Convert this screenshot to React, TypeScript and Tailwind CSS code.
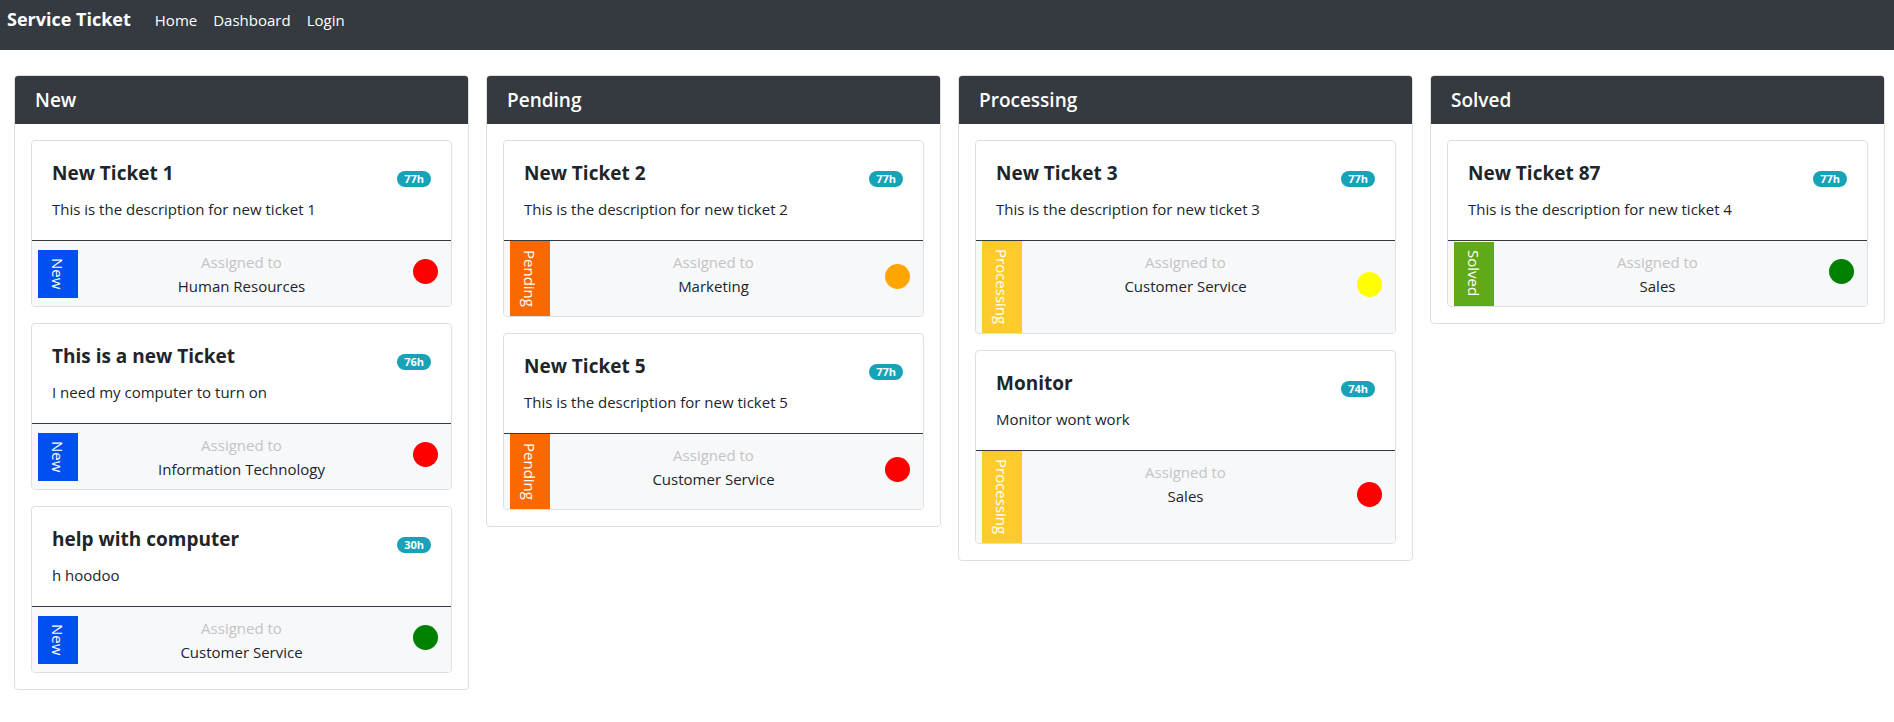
import React from "react";

type Ticket = {
  title: string;
  desc: string;
  age: string;
  dept: string;
  dot: string;
};

type Column = {
  name: string;
  strip: string;
  tickets: Ticket[];
};

const RED = "bg-[#ff0000]";
const GREEN = "bg-[#008000]";

const columns: Column[] = [
  {
    name: "New",
    strip: "bg-[#0050ef] h-[48px]",
    tickets: [
      { title: "New Ticket 1", desc: "This is the description for new ticket 1", age: "77h", dept: "Human Resources", dot: RED },
      { title: "This is a new Ticket", desc: "I need my computer to turn on", age: "76h", dept: "Information Technology", dot: RED },
      { title: "help with computer", desc: "h hoodoo", age: "30h", dept: "Customer Service", dot: GREEN },
    ],
  },
  {
    name: "Pending",
    strip: "bg-[#fa6800] h-[75px]",
    tickets: [
      { title: "New Ticket 2", desc: "This is the description for new ticket 2", age: "77h", dept: "Marketing", dot: "bg-[#ffa500]" },
      { title: "New Ticket 5", desc: "This is the description for new ticket 5", age: "77h", dept: "Customer Service", dot: RED },
    ],
  },
  {
    name: "Processing",
    strip: "bg-[#fecb2c] h-[92px]",
    tickets: [
      { title: "New Ticket 3", desc: "This is the description for new ticket 3", age: "77h", dept: "Customer Service", dot: "bg-[#ffff00]" },
      { title: "Monitor", desc: "Monitor wont work", age: "74h", dept: "Sales", dot: RED },
    ],
  },
  {
    name: "Solved",
    strip: "bg-[#60a917] h-[64px]",
    tickets: [
      { title: "New Ticket 87", desc: "This is the description for new ticket 4", age: "77h", dept: "Sales", dot: GREEN },
    ],
  },
];

function TicketCard({ t, status, strip }: { t: Ticket; status: string; strip: string }) {
  return (
    <div className="rounded-[4px] border border-[#dfdfdf] bg-white overflow-hidden">
      <div className="px-[20px] pt-[20px] pb-[19px]">
        <div className="flex h-[24px] items-start justify-between">
          <h5 className="text-[19px] leading-[24px] font-bold text-[#212529]">{t.title}</h5>
          <span className="mt-[10px] h-[16px] rounded-full bg-[#17a2b8] px-[7px] text-[11px] leading-[16px] font-bold text-white">
            {t.age}
          </span>
        </div>
        <p className="mt-[12px] text-[15px] leading-[24px] text-[#212529]">{t.desc}</p>
      </div>
      <div className="grid grid-cols-[1fr_auto_1fr] border-t border-[#343a40] bg-[#f7f8fa]">
        <div
          className={`${strip} ml-[6px] flex w-[40px] items-center justify-center self-center justify-self-start overflow-hidden`}
        >
          <span className="text-[15px] leading-[20px] whitespace-nowrap text-white [writing-mode:vertical-rl]">{status}</span>
        </div>
        <div className="self-start pt-[9px] pb-[8px] text-center text-[15px] leading-[24px]">
          <div className="text-[#c4c4c4]">Assigned to</div>
          <div className="text-[#212529]">{t.dept}</div>
        </div>
        <div className={`${t.dot} mr-[13px] mb-[5px] h-[25px] w-[25px] self-center justify-self-end rounded-full`} />
      </div>
    </div>
  );
}

export default function App() {
  return (
    <div className="min-h-[722px] bg-white font-['Open_Sans',sans-serif] text-[#212529]">
      <nav className="h-[50px] bg-[#343a40]">
        <div className="flex h-[38px] items-center pl-[7px]">
          <span className="mr-[16px] text-[18px] font-bold text-white">Service Ticket</span>
          <div className="flex items-center pt-[2px] text-[15px] text-white">
            <a className="px-[8px]">Home</a>
            <a className="px-[8px]">Dashboard</a>
            <a className="px-[8px]">Login</a>
          </div>
        </div>
      </nav>

      <div className="mt-[25px] grid grid-cols-4 items-start gap-[17px] pl-[14px] pr-[9px]">
        {columns.map((c) => (
          <div key={c.name} className="overflow-hidden rounded-[4px] border border-[#dfdfdf]">
            <div className="bg-[#343a40] px-[20px] py-[12px] text-[19px] leading-[24px] font-semibold text-white">
              {c.name}
            </div>
            <div className="flex flex-col gap-[16px] p-[16px]">
              {c.tickets.map((t) => (
                <TicketCard key={t.title} t={t} status={c.name} strip={c.strip} />
              ))}
            </div>
          </div>
        ))}
      </div>
    </div>
  );
}
